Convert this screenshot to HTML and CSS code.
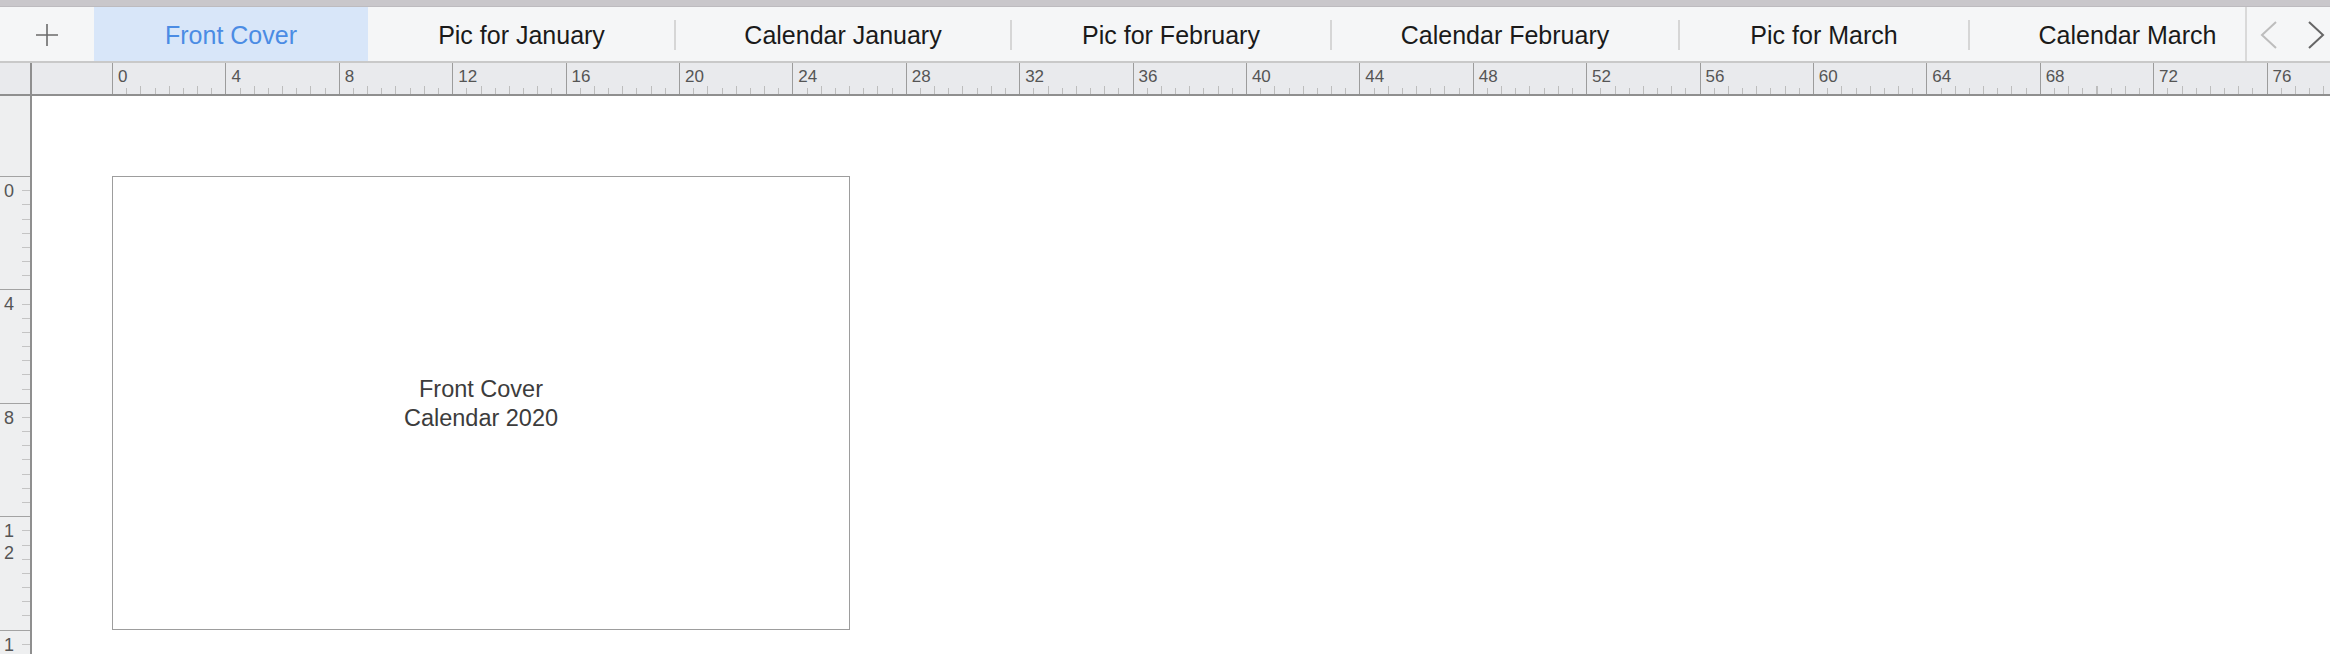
FILE: index.html
```html
<!DOCTYPE html>
<html>
<head>
<meta charset="utf-8">
<link rel="stylesheet" href="styles.css">
</head>
<body>
<div class="app">
  <div class="titlebar"></div>
  <div class="tabbar">
    <div class="add-btn">
      <svg width="24" height="24" viewBox="0 0 24 24"><path d="M12 1 V23 M1 12 H23" stroke="#6b6b6b" stroke-width="1.6" fill="none"/></svg>
    </div>
    <div class="tabs">
      <div class="tab active">Front Cover</div>
      <div class="tab">Pic for January</div>
      <div class="tab sep">Calendar January</div>
      <div class="tab sep">Pic for February</div>
      <div class="tab sep">Calendar February</div>
      <div class="tab sep">Pic for March</div>
      <div class="tab sep">Calendar March</div>
    </div>
    <div class="nav">
      <svg class="chev" width="18" height="30" viewBox="0 0 18 30"><path d="M16 2 L2 15 L16 28" stroke="#bdbdbd" stroke-width="2" fill="none"/></svg>
      <svg class="chev" width="18" height="30" viewBox="0 0 18 30"><path d="M2 2 L16 15 L2 28" stroke="#666666" stroke-width="2" fill="none"/></svg>
    </div>
  </div>
  <div class="hruler">
    <div class="corner"></div>
    <div class="hruler-track">
      <div class="hscale">
        <span class="hmark">0</span><span class="hmark">4</span><span class="hmark">8</span><span class="hmark">12</span><span class="hmark">16</span><span class="hmark">20</span><span class="hmark">24</span><span class="hmark">28</span><span class="hmark">32</span><span class="hmark">36</span><span class="hmark">40</span><span class="hmark">44</span><span class="hmark">48</span><span class="hmark">52</span><span class="hmark">56</span><span class="hmark">60</span><span class="hmark">64</span><span class="hmark">68</span><span class="hmark">72</span><span class="hmark">76</span>
      </div>
    </div>
  </div>
  <div class="workspace">
    <div class="vruler">
      <div class="vscale">
        <span class="vmark">0</span><span class="vmark">4</span><span class="vmark">8</span><span class="vmark">12</span><span class="vmark">16</span>
      </div>
    </div>
    <div class="canvas">
      <div class="page">
        <div class="page-title">Front Cover</div>
        <div class="page-title">Calendar 2020</div>
      </div>
    </div>
  </div>
</div>
</body>
</html>
```
FILE: styles.css
```css
* { box-sizing: border-box; }
html, body { margin: 0; padding: 0; }
body {
  width: 2330px;
  height: 654px;
  overflow: hidden;
  background: #ffffff;
  font-family: "Liberation Sans", Arial, sans-serif;
}
.app { display: flex; flex-direction: column; height: 654px; }
.titlebar {
  height: 7px;
  background: #c9c7cb;
  border-bottom: 1px solid #bdbbbf;
  flex: 0 0 auto;
}
.tabbar {
  display: flex;
  height: 56px;
  background: #f5f6f7;
  border-bottom: 2px solid #c9c9c9;
  flex: 0 0 auto;
}
.add-btn {
  width: 94px;
  flex: 0 0 94px;
  display: flex;
  align-items: center;
  justify-content: center;
  padding-top: 2px;
}
.tabs {
  flex: 1 1 auto;
  display: flex;
  overflow: hidden;
  min-width: 0;
}
.tab {
  position: relative;
  flex: 0 0 auto;
  display: flex;
  align-items: center;
  justify-content: center;
  padding-top: 3px;
  font-size: 25px;
  color: #1a1a1a;
  white-space: nowrap;
}
.tab:nth-child(1) { width: 274px; }
.tab:nth-child(2) { width: 307px; }
.tab:nth-child(3) { width: 336px; }
.tab:nth-child(4) { width: 320px; }
.tab:nth-child(5) { width: 348px; }
.tab:nth-child(6) { width: 290px; }
.tab:nth-child(7) { width: 317px; }
.tab.active {
  background: #d8e6f9;
  color: #4b8ce4;
}
.tab.sep::before {
  content: "";
  position: absolute;
  left: -1px;
  top: 13px;
  width: 2px;
  height: 30px;
  background: #d6d6d6;
}
.nav {
  flex: 0 0 85px;
  width: 85px;
  border-left: 2px solid #d9d9d9;
  display: flex;
  align-items: center;
  justify-content: space-between;
  padding: 2px 5px 0 13px;
}
.hruler {
  display: flex;
  height: 33px;
  flex: 0 0 auto;
  background: #e9eaed;
  border-bottom: 2px solid #8f8f8f;
}
.corner {
  width: 32px;
  flex: 0 0 32px;
  border-right: 2px solid #8f8f8f;
}
.hruler-track {
  flex: 1 1 auto;
  padding-left: 80px;
  overflow: hidden;
}
.hscale {
  height: 100%;
  display: flex;
  width: 2300px;
  background:
    repeating-linear-gradient(to right, #9c9c9c 0 1px, transparent 1px 113.4px) 0 0 / 100% 100% no-repeat,
    repeating-linear-gradient(to right, #bdbdbd 0 1px, transparent 1px 28.35px) 0 100% / 100% 8px no-repeat,
    repeating-linear-gradient(to right, #bdbdbd 0 1px, transparent 1px 14.175px) 0 100% / 100% 6px no-repeat;
}
.hmark {
  flex: 0 0 113.4px;
  width: 113.4px;
  padding: 4px 0 0 6px;
  font-size: 17px;
  line-height: 19px;
  color: #555555;
}
.workspace {
  flex: 1 1 auto;
  display: flex;
  min-height: 0;
}
.vruler {
  width: 32px;
  flex: 0 0 32px;
  background: #eeeff0;
  border-right: 2px solid #8f8f8f;
  padding-top: 80px;
  overflow: hidden;
}
.vscale {
  display: flex;
  flex-direction: column;
  height: 700px;
  background:
    repeating-linear-gradient(to bottom, #a3a3a3 0 1px, transparent 1px 113.4px) 0 0 / 100% 100% no-repeat,
    repeating-linear-gradient(to bottom, #c4c4c4 0 1px, transparent 1px 14.175px) 100% 0 / 8px 100% no-repeat;
}
.vmark {
  flex: 0 0 113.4px;
  height: 113.4px;
  width: 13px;
  margin-left: 4px;
  padding-top: 4px;
  font-size: 18px;
  line-height: 22px;
  color: #555555;
  word-break: break-all;
}
.canvas {
  flex: 1 1 auto;
  padding: 80px 0 0 80px;
  background: #ffffff;
}
.page {
  width: 738px;
  height: 454px;
  border: 1px solid #9d9d9d;
  display: flex;
  flex-direction: column;
  align-items: center;
  justify-content: center;
  padding-top: 1px;
}
.page-title {
  font-size: 23.5px;
  line-height: 29px;
  color: #3c3c3c;
}
```
